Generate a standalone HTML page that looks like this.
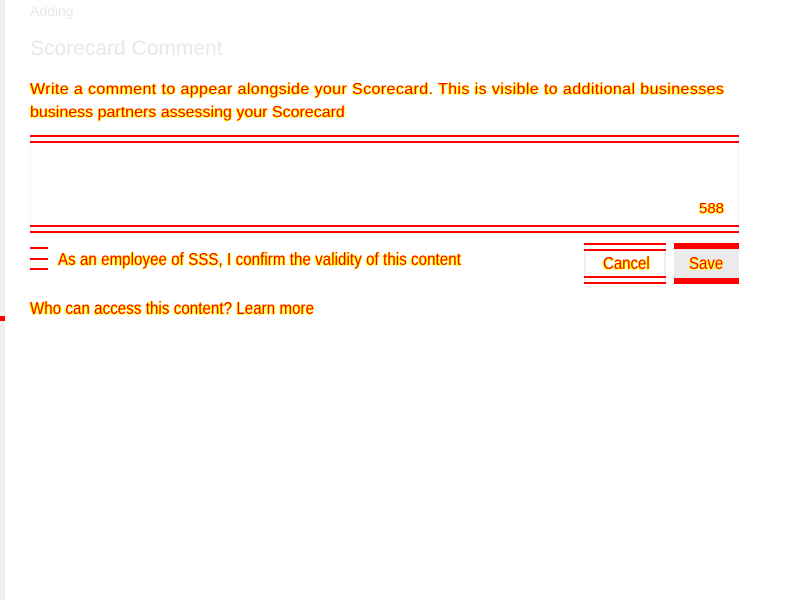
<!DOCTYPE html>
<html><head><style>
body{margin:0;width:800px;height:600px;background:#fff;position:relative;overflow:hidden;font-family:"Liberation Sans",sans-serif}
.bar{position:absolute;left:0;top:0;width:5px;height:600px;background:#f0f0f0}
.sq{position:absolute;left:0;top:316px;width:5px;height:5px;background:#f00}
.t{position:absolute;color:#f00;text-shadow:1px 0 #ff0,-1px 1px #ff0;white-space:nowrap}
.hl{position:absolute;height:2px;background:#f00}
</style></head><body>
<div class="bar"></div><div class="sq"></div>
<div style="position:absolute;left:30px;top:3px;font-size:14px;color:#e8e8e8">Adding</div>
<div style="position:absolute;left:30px;top:37px;font-size:21px;color:#e8e8e8">Scorecard Comment</div>
<div class="t" style="left:30px;top:81px;font-size:16px;letter-spacing:0.4px">Write a comment to appear alongside your Scorecard. This is visible to additional businesses</div>
<div class="t" style="left:30px;top:104px;font-size:16px">business partners assessing your Scorecard</div>
<div style="position:absolute;left:30px;top:135px;width:709px;height:97px;border-left:1px solid #f4f4f4;border-right:1px solid #f4f4f4;box-sizing:border-box"></div>
<div class="hl" style="left:30px;top:135px;width:709px"></div>
<div class="hl" style="left:30px;top:141px;width:709px"></div>
<div class="hl" style="left:30px;top:225px;width:709px"></div>
<div class="hl" style="left:30px;top:231px;width:709px"></div>
<div class="t" style="left:699px;top:200px;font-size:15px">588</div>
<div style="position:absolute;left:30px;top:247px;width:18px;height:23px;border-top:2px solid #f00;border-bottom:2px solid #f00;box-sizing:border-box"><div style="position:absolute;left:0;top:9px;width:18px;height:2px;background:#f00"></div></div>
<div class="t" style="left:58px;top:250px;font-size:15px;letter-spacing:0.1px;transform:scaleY(1.15);transform-origin:left top">As an employee of SSS, I confirm the validity of this content</div>
<div style="position:absolute;left:584px;top:243px;width:82px;height:41px;border:2px solid #eee;box-sizing:border-box"></div>
<div class="hl" style="left:584px;top:243px;width:82px"></div>
<div class="hl" style="left:584px;top:249px;width:82px"></div>
<div class="hl" style="left:584px;top:276px;width:82px"></div>
<div class="hl" style="left:584px;top:282px;width:82px"></div>
<div class="t" style="left:603px;top:254px;font-size:15px;transform:scaleY(1.15);transform-origin:left top">Cancel</div>
<div style="position:absolute;left:674px;top:243px;width:65px;height:41px;background:#ebebeb;border-top:6px solid #f00;border-bottom:6px solid #f00;box-sizing:border-box"></div>
<div class="t" style="left:689px;top:254px;font-size:15px;transform:scaleY(1.15);transform-origin:left top">Save</div>
<div class="t" style="left:30px;top:299px;font-size:15px;letter-spacing:0.1px;transform:scaleY(1.15);transform-origin:left top">Who can access this content? Learn more</div>
</body></html>
